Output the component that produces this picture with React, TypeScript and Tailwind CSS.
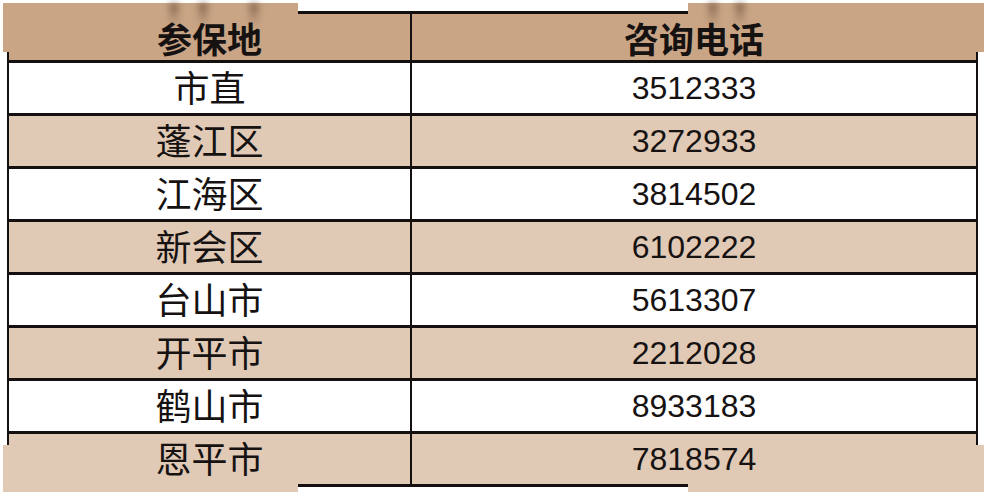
import type { ReactNode } from "react";

const rows: ReadonlyArray<readonly [string, string]> = [
  ["市直", "3512333"],
  ["蓬江区", "3272933"],
  ["江海区", "3814502"],
  ["新会区", "6102222"],
  ["台山市", "5613307"],
  ["开平市", "2212028"],
  ["鹤山市", "8933183"],
  ["恩平市", "7818574"],
];

const cjk = "font-['Noto_Sans_CJK_SC',sans-serif]";
const smudge = "h-[24px] w-[10px] bg-linear-to-b from-[#4a3426]/55 via-[#6a4c38]/30 to-transparent blur-[3px]";

interface CellProps {
  readonly children: ReactNode;
  readonly first?: boolean;
}

const Cell = ({ children, first }: CellProps) => (
  <div
    className={
      first
        ? "flex w-[403px] items-center justify-center border-r-2 border-[#141010]"
        : "flex flex-1 items-center justify-center"
    }
  >
    <span className="relative z-20">{children}</span>
  </div>
);

export default function App() {
  return (
    <div className="relative h-[496px] w-[987px] overflow-hidden bg-white text-[#161212]">
      {/* shifted patches from the photo, laid over the table edges */}
      <div className="absolute top-[3px] left-[3px] z-10 flex h-[49px] w-[295px] items-start bg-[#c9a585] pl-[166px]">
        <div className={smudge} />
        <div className={`${smudge} ml-[19px]`} />
        <div className={`${smudge} ml-[41px]`} />
      </div>
      <div className="absolute top-[3px] left-[688px] z-10 flex h-[49px] w-[296px] items-start bg-[#c9a585] pl-[20px]">
        <div className={smudge} />
        <div className={`${smudge} ml-[17px]`} />
      </div>
      <div className="absolute top-[445px] left-[3px] z-10 h-[47px] w-[295px] bg-[#e0c9b5]" />
      <div className="absolute top-[445px] left-[688px] z-10 h-[47px] w-[296px] bg-[#e0c9b5]" />

      <div className="mt-[11px] ml-[7px] flex w-[971px] flex-col border-x-2 border-t-[3px] border-[#141010]">
        <div
          className={`flex h-[49px] border-b-[3px] border-[#141010] bg-[#c9a585] text-[35px] leading-none font-bold ${cjk}`}
        >
          <Cell first>参保地</Cell>
          <Cell>咨询电话</Cell>
        </div>
        {rows.map(([place, phone], i) => (
          <div
            key={place}
            className={`flex h-[53px] border-b-[3px] border-[#141010] ${i % 2 === 1 ? "bg-[#e0c9b5]" : "bg-white"}`}
          >
            <Cell first>
              <span className={`text-[36px] leading-none ${cjk}`}>{place}</span>
            </Cell>
            <Cell>
              <span className="font-['Liberation_Sans',sans-serif] text-[32px] leading-none">
                {phone}
              </span>
            </Cell>
          </div>
        ))}
      </div>
    </div>
  );
}
